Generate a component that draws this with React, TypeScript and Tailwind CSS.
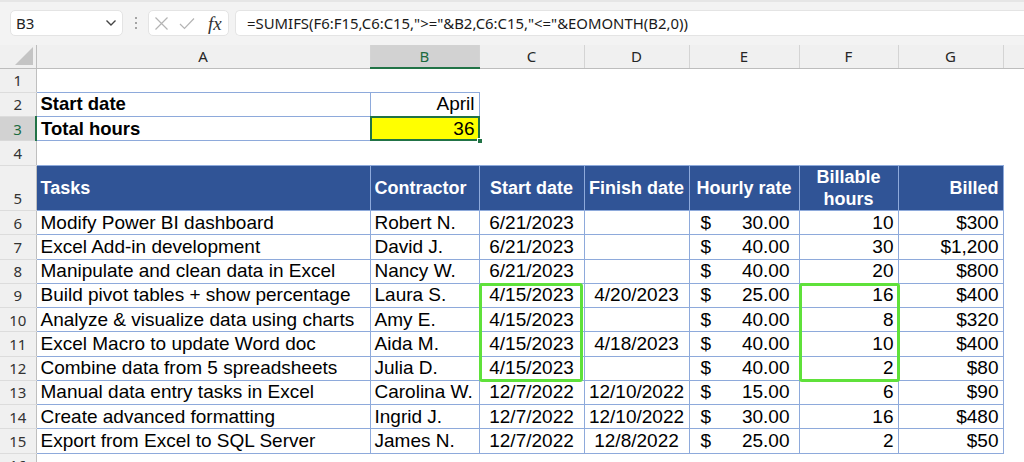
import React from "react";

type Task = {
  task: string;
  who: string;
  start: string;
  finish: string;
  rate: string;
  hours: string;
  billed: string;
};

const TASKS: Task[] = [
  { task: "Modify Power BI dashboard", who: "Robert N.", start: "6/21/2023", finish: "", rate: "30.00", hours: "10", billed: "$300" },
  { task: "Excel Add-in development", who: "David J.", start: "6/21/2023", finish: "", rate: "40.00", hours: "30", billed: "$1,200" },
  { task: "Manipulate and clean data in Excel", who: "Nancy W.", start: "6/21/2023", finish: "", rate: "40.00", hours: "20", billed: "$800" },
  { task: "Build pivot tables + show percentage", who: "Laura S.", start: "4/15/2023", finish: "4/20/2023", rate: "25.00", hours: "16", billed: "$400" },
  { task: "Analyze & visualize data using charts", who: "Amy E.", start: "4/15/2023", finish: "", rate: "40.00", hours: "8", billed: "$320" },
  { task: "Excel Macro to update Word doc", who: "Aida M.", start: "4/15/2023", finish: "4/18/2023", rate: "40.00", hours: "10", billed: "$400" },
  { task: "Combine data from 5 spreadsheets", who: "Julia D.", start: "4/15/2023", finish: "", rate: "40.00", hours: "2", billed: "$80" },
  { task: "Manual data entry tasks in Excel", who: "Carolina W.", start: "12/7/2022", finish: "12/10/2022", rate: "15.00", hours: "6", billed: "$90" },
  { task: "Create advanced formatting", who: "Ingrid J.", start: "12/7/2022", finish: "12/10/2022", rate: "30.00", hours: "16", billed: "$480" },
  { task: "Export from Excel to SQL Server", who: "James N.", start: "12/7/2022", finish: "12/8/2022", rate: "25.00", hours: "2", billed: "$50" },
];

const COLS = ["A", "B", "C", "D", "E", "F", "G", ""];

function RowNum({ n, active, low }: { n: number; active?: boolean; low?: boolean }) {
  return (
    <td
      className={
        active
          ? "border-b border-r-2 border-b-[#d9d9d9] border-r-[#217346] bg-[#d2d2d2] text-center font-['Noto_Sans',sans-serif] text-[15px] font-normal text-[#1d6b3f]"
          : low
          ? "border-b border-r border-b-[#dcdcdc] border-r-[#bfbfbf] bg-[#f0f0f0] pb-[1px] text-center align-bottom font-['Noto_Sans',sans-serif] text-[15px] font-normal text-[#333]"
          : "border-b border-r border-b-[#dcdcdc] border-r-[#bfbfbf] bg-[#f0f0f0] text-center font-['Noto_Sans',sans-serif] text-[15px] font-normal text-[#333]"
      }
    >
      {n}
    </td>
  );
}

function Empty({ n }: { n: number }) {
  return (
    <>
      {Array.from({ length: n }).map((_, i) => (
        <td key={i} />
      ))}
    </>
  );
}

function GreenBox({ w }: { w: string }) {
  return (
    <div
      className={`pointer-events-none absolute left-[-1px] top-[-1px] z-10 h-[99px] rounded-[3px] border-[3px] border-[#5fe13a] ${w}`}
    />
  );
}

export default function App() {
  const cell = "border border-[#8eaadb] px-[4px] whitespace-nowrap";
  return (
    <div className="h-[462px] w-[1024px] overflow-hidden bg-white font-['Liberation_Sans',Arial,sans-serif] text-black">
      {/* formula bar */}
      <div className="flex h-[45px] border-t-[2px] border-[#e6e6e6] bg-[#f3f3f3] pl-[10px] pt-[8px]">
        <div className="flex h-[26px] w-[113px] items-center justify-between rounded-[5px] border border-[#e4e4e4] bg-white pl-[5px] pr-[5px]">
          <span className="font-['Noto_Sans',sans-serif] text-[15px] text-[#222]">B3</span>
          <svg width="12" height="8" viewBox="0 0 12 8">
            <path d="M1.5 1.5 L6 6 L10.5 1.5" fill="none" stroke="#444" strokeWidth="1.4" />
          </svg>
        </div>
        <div className="flex h-[26px] w-[25px] flex-col items-center justify-center gap-[3px]">
          <span className="h-[2px] w-[2px] rounded-full bg-[#8a8a8a]" />
          <span className="h-[2px] w-[2px] rounded-full bg-[#8a8a8a]" />
          <span className="h-[2px] w-[2px] rounded-full bg-[#8a8a8a]" />
        </div>
        <div className="flex h-[26px] w-[81px] items-center rounded-[5px] border border-[#e4e4e4] bg-white pl-[5px]">
          <svg width="15" height="15" viewBox="0 0 15 15">
            <path d="M1.5 1.5 L13.5 13.5 M13.5 1.5 L1.5 13.5" stroke="#b4b4b4" strokeWidth="1.2" />
          </svg>
          <svg className="ml-[10px]" width="16" height="13" viewBox="0 0 16 13">
            <path d="M1 7 L5.5 11.5 L15 1.5" fill="none" stroke="#b4b4b4" strokeWidth="1.2" />
          </svg>
          <span className="ml-[13px] font-['Liberation_Serif',serif] text-[19px] italic leading-none text-[#333]">fx</span>
        </div>
        <div className="ml-[6px] flex h-[26px] flex-1 items-center rounded-l-[5px] border border-r-0 border-[#e4e4e4] bg-white pl-[11px] font-['Noto_Sans',sans-serif] text-[14.9px] text-[#1a1a1a]">
          =SUMIFS(F6:F15,C6:C15,"&gt;="&amp;B2,C6:C15,"&lt;="&amp;EOMONTH(B2,0))
        </div>
      </div>

      <table className="w-[1113px] table-fixed border-collapse text-[19px] leading-[22px]">
        <colgroup>
          <col className="w-[36px]" />
          <col className="w-[334px]" />
          <col className="w-[109px]" />
          <col className="w-[105px]" />
          <col className="w-[105px]" />
          <col className="w-[110px]" />
          <col className="w-[99px]" />
          <col className="w-[105px]" />
          <col className="w-[110px]" />
        </colgroup>
        <thead>
          <tr className="h-[23px]">
            <th className="relative border-b border-r border-b-[#bdbdbd] border-r-[#bdbdbd] bg-[#f0f0f0]">
              <svg className="absolute bottom-[3px] right-[3px]" width="18" height="18" viewBox="0 0 18 18">
                <polygon points="18,0 18,18 0,18" fill="#c4c4c4" />
              </svg>
            </th>
            {COLS.map((c) =>
              c === "B" ? (
                <th
                  key={c}
                  className="border-b-2 border-r border-b-[#217346] border-r-[#d4d4d4] bg-[#d2d2d2] font-['Noto_Sans',sans-serif] text-[15px] font-normal text-[#1d6b3f]"
                >
                  {c}
                </th>
              ) : (
                <th
                  key={c || "H"}
                  className="border-b border-r border-b-[#bdbdbd] border-r-[#d4d4d4] bg-[#f0f0f0] font-['Noto_Sans',sans-serif] text-[15px] font-normal text-[#262626]"
                >
                  {c}
                </th>
              )
            )}
          </tr>
        </thead>
        <tbody>
          <tr className="h-[24.25px]">
            <RowNum n={1} />
            <Empty n={8} />
          </tr>
          <tr className="h-[24.25px]">
            <RowNum n={2} />
            <td className={`${cell} text-[18.5px] font-bold`}>Start date</td>
            <td className={`${cell} text-right`}>April</td>
            <Empty n={6} />
          </tr>
          <tr className="h-[24.25px]">
            <RowNum n={3} active />
            <td className={`${cell} text-[18.5px] font-bold`}>Total hours</td>
            <td className={`${cell} relative bg-[#ffff00] text-right`}>
              36
              <div className="pointer-events-none absolute inset-[-1px] border-2 border-[#217346]" />
              <div className="absolute bottom-[-4px] right-[-4px] h-[6px] w-[6px] border border-white bg-[#217346]" />
            </td>
            <Empty n={6} />
          </tr>
          <tr className="h-[24.25px]">
            <RowNum n={4} />
            <Empty n={8} />
          </tr>
          <tr className="h-[45.5px] text-[18px] font-bold text-white">
            <RowNum n={5} low />
            <td className={`${cell} bg-[#305496]`}>Tasks</td>
            <td className={`${cell} bg-[#305496]`}>Contractor</td>
            <td className={`${cell} bg-[#305496] text-center`}>Start date</td>
            <td className={`${cell} bg-[#305496] text-center`}>Finish date</td>
            <td className={`${cell} bg-[#305496] text-center`}>Hourly rate</td>
            <td className={`${cell} bg-[#305496] text-center leading-[22px]`}>
              Billable
              <br />
              hours
            </td>
            <td className={`${cell} bg-[#305496] text-right`}>Billed</td>
            <td />
          </tr>
          {TASKS.map((t, i) => (
            <tr key={t.task} className="h-[24.25px]">
              <RowNum n={i + 6} />
              <td className={cell}>{t.task}</td>
              <td className={cell}>{t.who}</td>
              <td className={`${cell} relative text-center`}>
                {t.start}
                {i === 3 && <GreenBox w="w-[104px]" />}
              </td>
              <td className={`${cell} text-center`}>{t.finish}</td>
              <td className={`${cell} pl-[11px] pr-[9px]`}>
                <div className="flex justify-between">
                  <span>$</span>
                  <span>{t.rate}</span>
                </div>
              </td>
              <td className={`${cell} relative text-right`}>
                {t.hours}
                {i === 3 && <GreenBox w="w-[101px]" />}
              </td>
              <td className={`${cell} text-right`}>{t.billed}</td>
              <td />
            </tr>
          ))}
          <tr className="h-[24.25px]">
            <RowNum n={16} />
            <Empty n={8} />
          </tr>
        </tbody>
      </table>
    </div>
  );
}
